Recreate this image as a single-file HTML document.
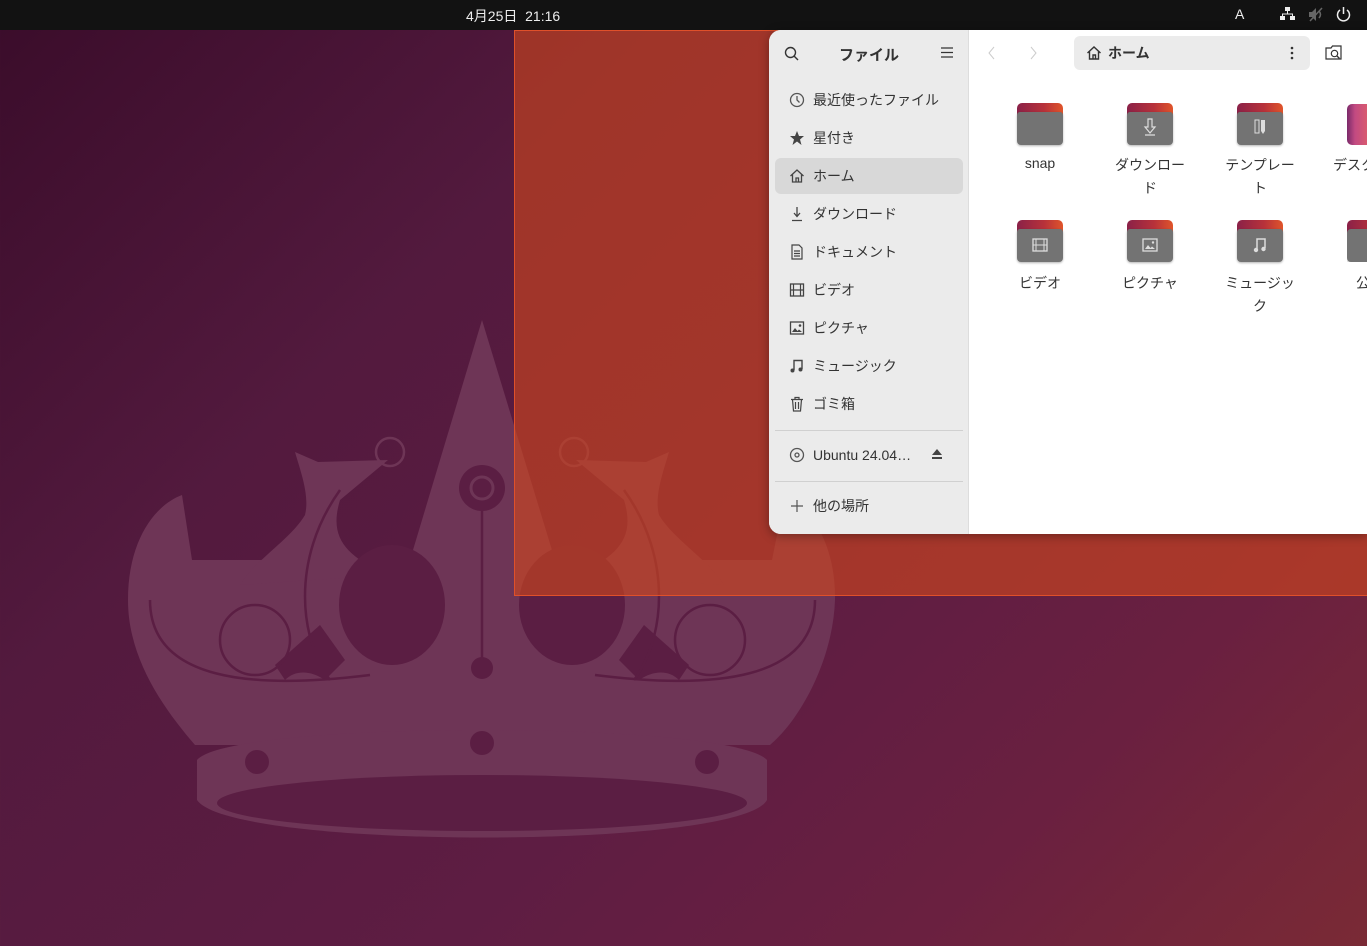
<!DOCTYPE html>
<html><head><meta charset="utf-8"><style>
*{margin:0;padding:0;box-sizing:border-box}
body{width:1367px;height:946px;overflow:hidden;position:relative;font-family:"Liberation Sans","Noto Sans CJK JP",sans-serif;background:linear-gradient(135deg,#3a0c2a 0%,#531a3e 30%,#5e1d43 60%,#6a2040 80%,#7a2a35 100%)}
#top{position:absolute;left:0;top:0;width:1367px;height:30px;background:#121212;color:#eee;font-size:14px}
#ov{position:absolute;left:514px;top:30px;width:853px;height:566px;background:rgba(212,72,28,.6);border:1px solid #e0502a;border-right:none}
#win{position:absolute;left:769px;top:30px;width:598px;height:504px;background:#fff;border-radius:12px 0 0 12px;overflow:hidden;box-shadow:0 2px 10px rgba(0,0,0,.35)}
#side{position:absolute;left:0;top:0;width:200px;height:504px;background:#ebebeb;border-right:1px solid #ddd}
.it{position:absolute;left:6px;width:188px;height:36px;font-size:14px;color:#333;line-height:36px;padding-left:38px}
.it svg{position:absolute;left:14px;top:10px}
.sel{background:#d8d8d8;border-radius:6px}
.sep{position:absolute;left:6px;width:188px;height:1px;background:#d0d0d0}
.f{position:absolute;width:46px;height:42px}
.f .tab{position:absolute;left:0;top:0;width:46px;height:20px;border-radius:5px 5px 0 0;background:linear-gradient(90deg,#8a2148,#b8323a 60%,#e0552a)}
.f .bd{position:absolute;left:0;top:9px;width:46px;height:33px;background:#737373;border-radius:3px 3px 4px 4px;box-shadow:0 1px 2px rgba(0,0,0,.3)}
.lb{position:absolute;width:100px;text-align:center;font-size:14px;color:#333;line-height:23px}
</style></head><body>
<svg style="position:absolute;left:0;top:0" width="1367" height="946">
<g fill="#6e3556">
<path d="M128,600 C128,540 155,505 182,495 L192,560 L772,560 L785,495 C815,510 836,550 835,600 C833,660 800,720 770,745 L195,745 C165,710 128,660 128,600Z"/>
<path d="M482,320 L555,560 L410,560Z"/>
<path id="bd" d="M295,452 L318,462 L388,460 L340,500 C328,540 348,555 385,575 L240,585 C255,560 290,540 305,515 C310,495 300,470 295,452Z"/>
<path d="M669,452 L646,462 L576,460 L624,500 C636,540 616,555 579,575 L724,585 C709,560 674,540 659,515 C654,495 664,470 669,452Z"/>
<path d="M197,760 C230,720 730,720 767,760 L767,800 C740,850 230,850 197,800Z"/>
</g>
<g fill="#5b1e43">
<ellipse cx="482" cy="803" rx="265" ry="28"/>
<ellipse cx="392" cy="605" rx="53" ry="60"/>
<ellipse cx="572" cy="605" rx="53" ry="60"/>
<circle cx="257" cy="762" r="12"/><circle cx="707" cy="762" r="12"/><circle cx="482" cy="743" r="12"/>
<circle cx="482" cy="668" r="11"/><circle cx="482" cy="488" r="23"/>
<path d="M275,665 L320,625 L345,660 L325,680 C310,670 295,670 285,680Z"/>
<path d="M689,665 L644,625 L619,660 L639,680 C654,670 669,670 679,680Z"/>
</g>
<circle cx="482" cy="488" r="11" fill="none" stroke="#6e3556" stroke-width="3"/>
<g fill="none" stroke="#5b1e43" stroke-width="2.5">
<path d="M482,510 L482,660"/>
<path d="M150,600 C150,680 250,690 370,675"/>
<path d="M815,600 C815,680 715,690 595,675"/>
<circle cx="255" cy="640" r="35"/><circle cx="710" cy="640" r="35"/>
<path d="M340,490 C290,560 300,640 330,680"/><path d="M624,490 C674,560 664,640 634,680"/>
</g>
<g fill="none" stroke="#6e3556" stroke-width="2.5"><circle cx="390" cy="452" r="14"/><circle cx="574" cy="452" r="14"/></g>
</svg>
<div id="top"><span style="position:absolute;left:466px;top:6px">4月25日&nbsp; 21:16</span>
<span style="position:absolute;left:1235px;top:6px">A</span>
<svg style="position:absolute;left:1280px;top:7px" width="15" height="14"><rect x="5" y="0" width="5" height="4" fill="#eee"/><rect x="0" y="9" width="5" height="4" fill="#eee"/><rect x="10" y="9" width="5" height="4" fill="#eee"/><path d="M7.5,4V7M2.5,9V7H12.5V9" stroke="#eee" fill="none"/></svg>
<svg style="position:absolute;left:1308px;top:7px" width="16" height="15"><path d="M1,5H4L8,1V14L4,10H1Z" fill="#666"/><path d="M11,4Q14,7.5 11,11M2,14L14,1" stroke="#666" stroke-width="1.5" fill="none"/></svg>
<svg style="position:absolute;left:1336px;top:6px" width="15" height="16"><path d="M4,4A6,6 0 1 0 11,4M7.5,1V8" stroke="#eee" stroke-width="1.5" fill="none"/></svg>
</div>
<div id="ov"></div>
<div id="win">
<div id="side">
<svg style="position:absolute;left:15px;top:16px" width="16" height="16"><circle cx="6.5" cy="6.5" r="5" stroke="#333" stroke-width="1.4" fill="none"/><path d="M10,10L14,14" stroke="#333" stroke-width="1.4"/></svg>
<div style="position:absolute;left:70px;top:14px;font-size:15px;font-weight:bold;color:#333">ファイル</div>
<svg style="position:absolute;left:172px;top:17px" width="12" height="11"><path d="M0,1H12M0,5.5H12M0,10H12" stroke="#333" stroke-width="1.2"/></svg>
<div class="it" style="top:52px"><svg width="16" height="16"><circle cx="8" cy="8" r="6.5" stroke="#555" stroke-width="1.3" fill="none"/><path d="M8,4V8L10.5,10.5" stroke="#555" stroke-width="1.3" fill="none"/></svg>最近使ったファイル</div>
<div class="it" style="top:90px"><svg width="16" height="16"><path d="M8,1L10,6H15L11,9.5L12.5,15L8,11.5L3.5,15L5,9.5L1,6H6Z" fill="#444"/></svg>星付き</div>
<div class="it sel" style="top:128px"><svg width="16" height="16"><path d="M1.5,8L8,2L14.5,8M3.5,6.5V14H12.5V6.5M7,14V10H9.5V14" stroke="#444" stroke-width="1.3" fill="none"/></svg>ホーム</div>
<div class="it" style="top:166px"><svg width="16" height="16"><path d="M8,1V10M5,7L8,10.5L11,7M3,14.5H13" stroke="#444" stroke-width="1.3" fill="none"/></svg>ダウンロード</div>
<div class="it" style="top:204px"><svg width="16" height="16"><path d="M3,1H10L13,4V15H3Z M5,7H11M5,9.5H11M5,12H11" stroke="#444" stroke-width="1.2" fill="none"/></svg>ドキュメント</div>
<div class="it" style="top:242px"><svg width="16" height="16"><rect x="1.5" y="2" width="13" height="12" stroke="#444" stroke-width="1.3" fill="none"/><path d="M4.5,2V14M11.5,2V14M1.5,8H14.5" stroke="#444" stroke-width="1.2"/></svg>ビデオ</div>
<div class="it" style="top:280px"><svg width="16" height="16"><rect x="1.5" y="2" width="13" height="12" stroke="#444" stroke-width="1.3" fill="none"/><path d="M3,12L6,8L8.5,11L10,9.5L13,12Z" fill="#444"/><circle cx="11" cy="5.5" r="1.3" fill="#444"/></svg>ピクチャ</div>
<div class="it" style="top:318px"><svg width="16" height="16"><path d="M5,12V2.5H13V11" stroke="#444" stroke-width="1.4" fill="none"/><circle cx="3.5" cy="12.5" r="2" fill="#444"/><circle cx="11.5" cy="11.5" r="2" fill="#444"/></svg>ミュージック</div>
<div class="it" style="top:356px"><svg width="16" height="16"><path d="M2,3.5H14M6,3.5V1.5H10V3.5M3.5,3.5L4.5,15H11.5L12.5,3.5M6.5,6V13M9.5,6V13" stroke="#444" stroke-width="1.2" fill="none"/></svg>ゴミ箱</div>
<div class="sep" style="top:400px"></div>
<div class="it" style="top:407px"><svg width="16" height="16"><circle cx="8" cy="8" r="6.5" stroke="#555" stroke-width="1.3" fill="none"/><circle cx="8" cy="8" r="2" stroke="#555" stroke-width="1.3" fill="none"/></svg>Ubuntu 24.04…<svg style="left:157px;top:12px" width="10" height="10"><path d="M0,6L5,0L10,6Z M0,8H10V10H0Z" fill="#444"/></svg></div>
<div class="sep" style="top:451px"></div>
<div class="it" style="top:458px"><svg width="16" height="16"><path d="M8,2V14M2,8H14" stroke="#555" stroke-width="1.2"/></svg>他の場所</div>
</div>
<svg style="position:absolute;left:219px;top:16px" width="8" height="14"><path d="M6,1L1,7L6,13" stroke="#ccc" fill="none"/></svg>
<svg style="position:absolute;left:260px;top:16px" width="8" height="14"><path d="M2,1L7,7L2,13" stroke="#ccc" fill="none"/></svg>
<div style="position:absolute;left:305px;top:6px;width:236px;height:34px;background:#ebebeb;border-radius:6px">
<svg style="position:absolute;left:12px;top:9px" width="16" height="16"><path d="M1.5,8L8,2L14.5,8M3.5,6.5V14H12.5V6.5M7,14V10H9.5V14" stroke="#333" stroke-width="1.4" fill="none"/></svg>
<span style="position:absolute;left:34px;top:7px;font-size:14px;font-weight:bold;color:#333">ホーム</span>
<svg style="position:absolute;left:216px;top:10px" width="4" height="14"><circle cx="2" cy="2" r="1.3" fill="#333"/><circle cx="2" cy="7" r="1.3" fill="#333"/><circle cx="2" cy="12" r="1.3" fill="#333"/></svg>
</div>
<svg style="position:absolute;left:556px;top:15px" width="18" height="16"><path d="M1,14V3H6L7.5,1H16V14Z" stroke="#333" stroke-width="1.2" fill="none"/><circle cx="9.5" cy="8.5" r="3.2" stroke="#333" stroke-width="1.2" fill="none"/><path d="M12,11L14.5,13.5" stroke="#333" stroke-width="1.3"/></svg>
</div>
<div class="f" style="left:1017px;top:103px"><div class="tab"></div><div class="bd"></div></div>
<div class="f" style="left:1127px;top:103px"><div class="tab"></div><div class="bd"><svg style="position:absolute;left:16px;top:6px" width="14" height="18"><path d="M5,1H9V9H12L7,15L2,9H5Z M2,17H12" stroke="#ddd" stroke-width="1.2" fill="none"/></svg></div></div>
<div class="f" style="left:1237px;top:103px"><div class="tab"></div><div class="bd"><svg style="position:absolute;left:17px;top:7px" width="12" height="16"><rect x="1" y="1" width="4" height="13" stroke="#ddd" fill="none"/><path d="M7,1H11V12L9,15L7,12Z" fill="#ddd"/></svg></div></div>
<div style="position:absolute;left:1347px;top:104px;width:20px;height:41px;border-radius:5px 0 0 5px;background:linear-gradient(90deg,#7a2a6a,#c24a82 40%,#d85a70)"></div>
<div class="f" style="left:1017px;top:220px"><div class="tab"></div><div class="bd"><svg style="position:absolute;left:15px;top:9px" width="16" height="14"><rect x="1" y="1" width="14" height="12" stroke="#ddd" stroke-width="1.3" fill="none"/><path d="M4,1V13M12,1V13M1,7H15" stroke="#ddd"/></svg></div></div>
<div class="f" style="left:1127px;top:220px"><div class="tab"></div><div class="bd"><svg style="position:absolute;left:15px;top:9px" width="16" height="14"><rect x="1" y="1" width="14" height="12" stroke="#ddd" stroke-width="1.3" fill="none"/><path d="M3,11L6,7L8.5,10L10,8.5L13,11Z" fill="#ddd"/><circle cx="11" cy="4.5" r="1.2" fill="#ddd"/></svg></div></div>
<div class="f" style="left:1237px;top:220px"><div class="tab"></div><div class="bd"><svg style="position:absolute;left:16px;top:8px" width="14" height="16"><path d="M4,13V2H12V11" stroke="#ddd" stroke-width="1.5" fill="none"/><circle cx="3" cy="13" r="2.2" fill="#ddd"/><circle cx="10.5" cy="12" r="2.2" fill="#ddd"/></svg></div></div>
<div class="f" style="left:1347px;top:220px;width:20px;overflow:hidden"><div class="tab"></div><div class="bd" style="border-radius:4px 0 0 4px"></div></div>
<div class="lb" style="left:990px;top:152px">snap</div>
<div class="lb" style="left:1100px;top:154px">ダウンロー<br>ド</div>
<div class="lb" style="left:1210px;top:154px">テンプレー<br>ト</div>
<div style="position:absolute;left:1333px;top:154px;font-size:14px;color:#333;line-height:23px;white-space:nowrap">デスク</div>
<div style="position:absolute;left:1356px;top:272px;font-size:14px;color:#333;line-height:23px">公</div>
<div class="lb" style="left:990px;top:272px">ビデオ</div>
<div class="lb" style="left:1100px;top:272px">ピクチャ</div>
<div class="lb" style="left:1210px;top:272px">ミュージッ<br>ク</div>
</body></html>
